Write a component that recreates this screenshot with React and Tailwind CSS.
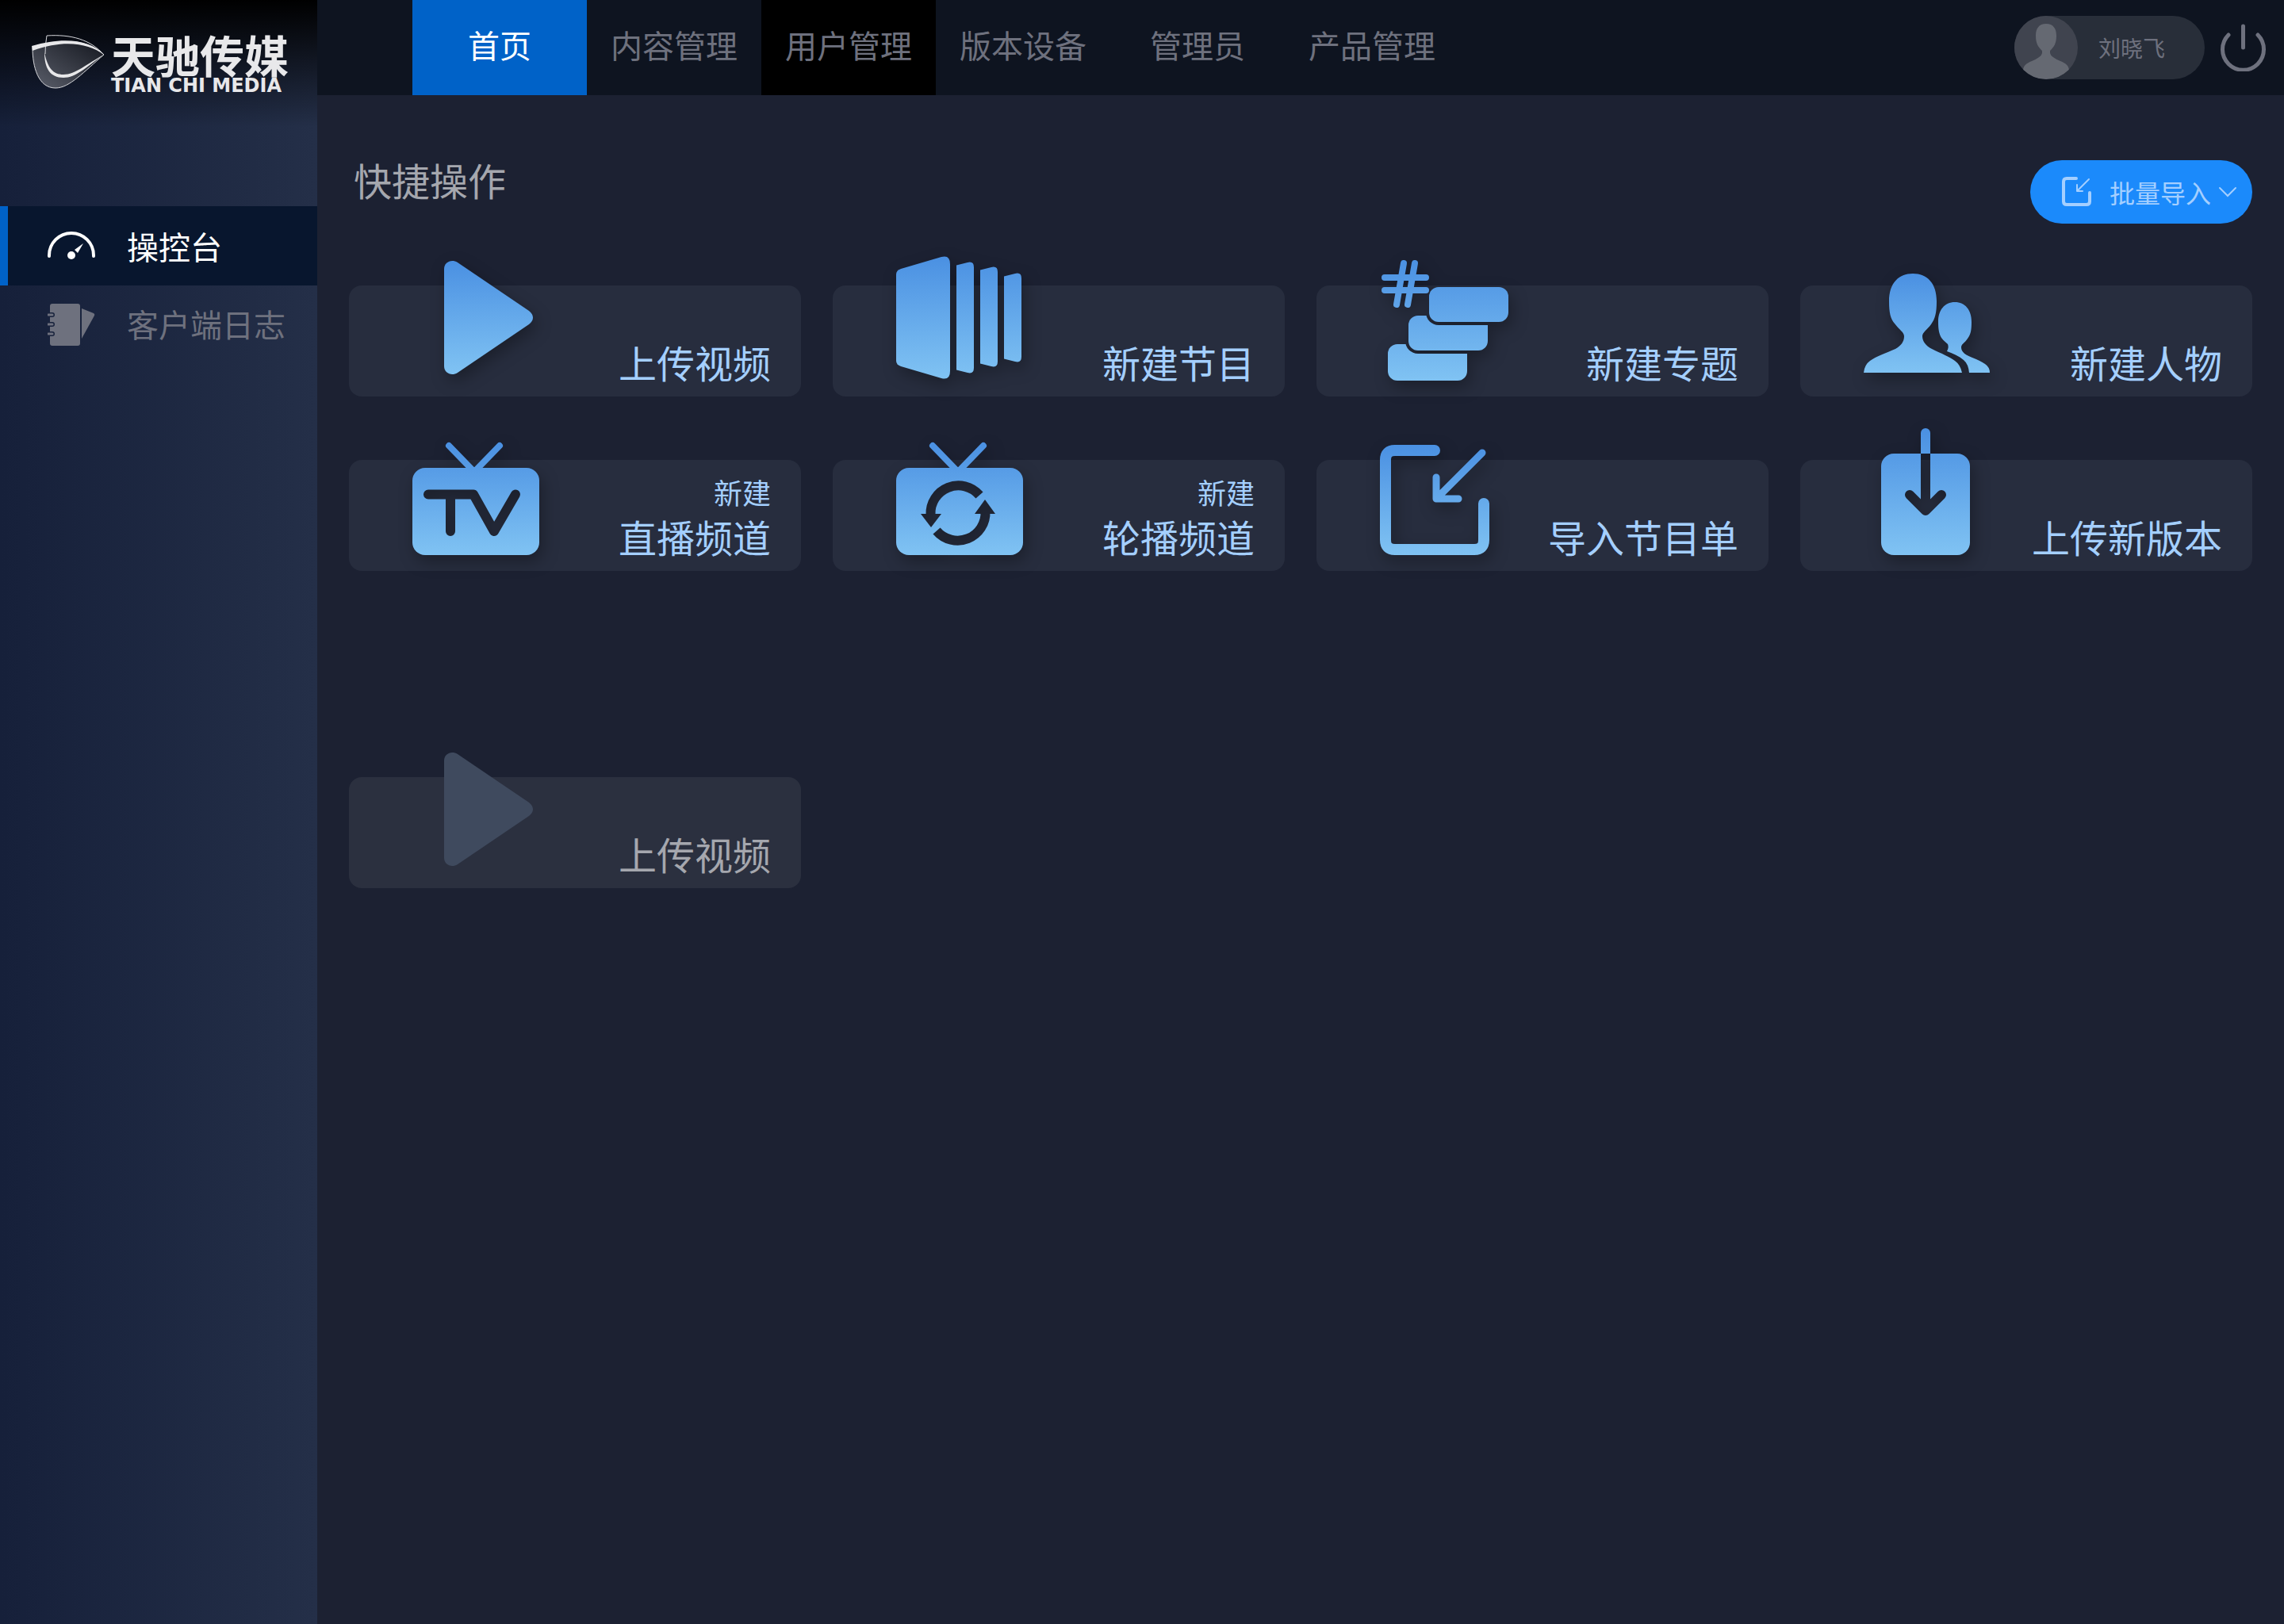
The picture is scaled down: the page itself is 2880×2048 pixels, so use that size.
import React, { useId } from 'react';

const FONT = "font-['Noto_Sans_CJK_SC',sans-serif]";

function Gradient({ id, h }) {
  return (
    <linearGradient id={id} gradientUnits="userSpaceOnUse" x1="0" y1="0" x2="0" y2={h}>
      <stop offset="0" stopColor="#4a90e2" />
      <stop offset="1" stopColor="#80c3f3" />
    </linearGradient>
  );
}

function Art({ w, h, muted, children }) {
  const id = useId();
  const paint = muted ? '#3f4a5e' : `url(#${id})`;
  return (
    <svg
      width={w}
      height={h}
      viewBox={`0 0 ${w} ${h}`}
      aria-hidden="true"
      className={muted ? 'overflow-visible' : 'overflow-visible drop-shadow-[4px_8px_10px_rgba(0,0,0,0.3)]'}
    >
      <defs>
        <Gradient id={id} h={h} />
      </defs>
      {children(paint, id)}
    </svg>
  );
}

const PlayArt = ({ muted }) => (
  <Art w={112} h={143} muted={muted}>
    {(p) => <path fill={p} d="M0 10C0 2 9-3 17 2L107 63Q112 67 112 71.500Q112 76 107 80L17 141C9 146 0 141 0 133Z" />}
  </Art>
);

const PanelsArt = () => (
  <Art w={158} h={155}>
    {(p) => (
      <g fill={p}>
        <path d="M0 23Q0 18 6 16L57 1Q68-2 68 10V145Q68 157 57 154L6 139Q0 137 0 132Z" />
        <path d="M76 11.500L90 8Q98 6 98 14V141Q98 149 90 147L76 143.500Z" />
        <path d="M106 17.500L120 14Q128 12 128 20V133Q128 141 120 139L106 135.500Z" />
        <path d="M136 25.500L150 22Q158 20 158 28V127Q158 135 150 133L136 129.500Z" />
      </g>
    )}
  </Art>
);

const TopicsArt = () => (
  <Art w={160} h={152}>
    {(p, id) => (
      <>
        <g stroke={p} strokeWidth="8" strokeLinecap="round" fill="none">
          <path d="M28 4L19 56M42 4L33 56" />
          <path d="M4 22L56 22.010M4 38L56 38.010" />
        </g>
        <mask id={`${id}a`}>
          <rect width="160" height="152" fill="#fff" />
          <rect x="56" y="30" width="108" height="52" rx="16" fill="#000" />
          <rect x="100" y="60" width="60" height="22" fill="#000" />
        </mask>
        <mask id={`${id}b`}>
          <rect width="160" height="152" fill="#fff" />
          <rect x="30" y="66" width="108" height="52" rx="16" fill="#000" />
          <rect x="80" y="96" width="60" height="22" fill="#000" />
        </mask>
        <g fill={p}>
          <rect x="60" y="34" width="100" height="44" rx="12" />
          <rect x="34" y="70" width="100" height="44" rx="12" mask={`url(#${id}a)`} />
          <rect x="8" y="106" width="100" height="46" rx="12" mask={`url(#${id}b)`} />
        </g>
      </>
    )}
  </Art>
);

const PeopleArt = () => (
  <Art w={160} h={125}>
    {(p) => (
      <g fill={p}>
        <path d="M62 0C80 0 92 12 92 35C92 50 90 57 85 64C80 71 74 74 74 79C74 85 78 91 86 95C98 101 109 105 115 110Q122 115 124 125H0Q1 115 8 110C16 104 27 101 40 95C47 91 51 86 51 79C51 74 45 71 39 63C34 57 32 50 32 35C32 12 44 0 62 0Z" />
        <path d="M115 36C128 36 136 46 136 61C136 71 135 77 131 82C127 88 123 89 123 93C123 99 129 103 137 106C144 109 149 111 153 114Q159 118 159 125H133Q132 114 126 109C120 104 113 101 105 98C107 94 107 92 106 89C104 87 101 85 98 81C95 76 94 70 94 61C94 46 102 36 115 36Z" />
      </g>
    )}
  </Art>
);

const TvArt = ({ children }) => (
  <Art w={160} h={142}>
    {(p, id) => (
      <>
        <mask id={`${id}m`}>
          <rect width="160" height="142" fill="#fff" />
          {children}
        </mask>
        <path d="M46 4L78 37L110 4" fill="none" stroke={p} strokeWidth="8" strokeLinecap="round" />
        <rect y="32" width="160" height="110" rx="16" fill={p} mask={`url(#${id}m)`} />
      </>
    )}
  </Art>
);

const LiveArt = () => (
  <TvArt>
    <path
      d="M20 65.500H77L103 112L130 65.500M48 65.500V112"
      fill="none"
      stroke="#000"
      strokeWidth="12"
      strokeLinecap="round"
      strokeLinejoin="round"
    />
  </TvArt>
);

const LoopArt = () => (
  <TvArt>
    <g fill="none" stroke="#000" strokeWidth="12">
      <path d="M105 66.500A35 35 0 0 0 43.500 91" />
      <path d="M51 111.500A35 35 0 0 0 112.500 87" />
    </g>
    <path d="M31 90H57L44 107ZM99 90H125L112 72Z" fill="#000" />
  </TvArt>
);

const ImportArt = () => (
  <Art w={138} h={139}>
    {(p) => (
      <g fill="none" stroke={p} strokeLinecap="round" strokeLinejoin="round">
        <path strokeWidth="14" d="M69 7H19Q7 7 7 19V120Q7 132 19 132H119Q131 132 131 120V74" />
        <path strokeWidth="9" d="M129 10L71 68M71 41V68H99" />
      </g>
    )}
  </Art>
);

const ReleaseArt = () => (
  <Art w={112} h={160}>
    {(p, id) => (
      <>
        <mask id={`${id}m`}>
          <rect width="112" height="160" fill="#fff" />
          <path d="M56 20V100" stroke="#000" strokeWidth="12" />
          <path d="M36 84L56 104L76 84" fill="none" stroke="#000" strokeWidth="12" strokeLinecap="round" strokeLinejoin="round" />
        </mask>
        <path d="M50 32V6A6 6 0 0 1 62 6V32Z" fill={p} />
        <rect y="32" width="112" height="128" rx="16" fill={p} mask={`url(#${id}m)`} />
      </>
    )}
  </Art>
);

function ImportGlyph() {
  return (
    <svg width="38" height="38" viewBox="0 0 38 38" fill="none" stroke="currentColor" strokeLinecap="round" strokeLinejoin="round" aria-hidden="true">
      <path strokeWidth="4" d="M18 2H6Q2 2 2 6V31Q2 35 6 35H31Q35 35 35 31V20" />
      <path strokeWidth="2" d="M34 3L19 18M19 10V18H26" />
    </svg>
  );
}

function Logo() {
  return (
    <svg width="92" height="70" viewBox="0 0 92 70" fill="none" className="mt-1" aria-hidden="true">
      <defs>
        <linearGradient id="logoFill" x1="0" y1="1" x2="1" y2="0">
          <stop offset="0" stopColor="#5b5f6b" />
          <stop offset="1" stopColor="#14171f" />
        </linearGradient>
      </defs>
      <path d="M1 16C1 40 8 67 30 67C48 67 66 46 91 25C72 6 40 4 1 16Z" fill="url(#logoFill)" stroke="#d5d6da" strokeWidth="1" />
      <path d="M17 24Q17 12 19 1C50-1 74 6 91 25" stroke="#d5d6da" strokeWidth="1" />
      <path d="M0 14C40 2 74 6 91 25C72 11 42 5 1 20Z" fill="#e8e8ea" />
      <path d="M16 22C20 42 27 50 40 50C55 50 70 36 91 25C68 41 56 54 40 54C23 54 16 42 16 22Z" fill="#e8e8ea" />
    </svg>
  );
}

function GaugeIcon() {
  return (
    <svg width="60" height="36" viewBox="0 0 60 36" fill="none" aria-hidden="true">
      <path d="M2 31V30A28 28 0 0 1 58 30V31" stroke="currentColor" strokeWidth="4" strokeLinecap="round" />
      <circle cx="30" cy="30" r="5" fill="currentColor" />
      <path d="M45 15L34 23L38 27Z" fill="currentColor" />
    </svg>
  );
}

function NotebookIcon() {
  return (
    <svg width="60" height="54" viewBox="0 0 60 54" aria-hidden="true">
      <mask id="rings">
        <rect width="60" height="54" fill="#fff" />
        <path d="M0 14H6M0 26H6M0 38H6" stroke="#000" strokeWidth="6" strokeLinecap="round" />
      </mask>
      <rect x="3" y="0" width="38" height="53" rx="3" fill="currentColor" mask="url(#rings)" />
      <path d="M1 14H6M1 26H6M1 38H6" stroke="currentColor" strokeWidth="3" strokeLinecap="round" />
      <path d="M43 6L58 12Q60 13 59 15L43 44Z" fill="currentColor" />
    </svg>
  );
}

function AvatarIcon() {
  return (
    <svg width="80" height="80" viewBox="0 0 80 80" className="rounded-full bg-[#40444f]" aria-hidden="true">
      <path
        fill="#656972"
        d="M40 10C49 10 53 16 53 25C53 35 50 39 45 44V47Q46 52 58 57C65 60 68 62 69 68Q58 80 40 80Q22 80 11 68C12 62 15 60 22 57Q34 52 35 47V44C30 39 27 35 27 25C27 16 31 10 40 10Z"
      />
    </svg>
  );
}

function PowerIcon() {
  return (
    <svg width="58" height="60" viewBox="0 0 58 60" fill="none" stroke="currentColor" strokeWidth="5" strokeLinecap="round" aria-hidden="true">
      <path d="M28.500 3V30M10 14A26 26 0 1 0 47 14" />
    </svg>
  );
}

const tabs = ['首页', '内容管理', '用户管理', '版本设备', '管理员', '产品管理'];

const tabTone = {
  首页: 'bg-[#0062c8] text-white',
  用户管理: 'bg-black text-[#6e717e]',
};

const actions = [
  { title: '上传视频', art: <PlayArt />, place: 'left-[120px] bottom-[28px]' },
  { title: '新建节目', art: <PanelsArt />, place: 'left-[80px] bottom-[22px]' },
  { title: '新建专题', art: <TopicsArt />, place: 'left-[82px] bottom-[20px]' },
  { title: '新建人物', art: <PeopleArt />, place: 'left-[80px] bottom-[30px]' },
  { title: '直播频道', sub: '新建', art: <LiveArt />, place: 'left-[80px] bottom-[20px]' },
  { title: '轮播频道', sub: '新建', art: <LoopArt />, place: 'left-[80px] bottom-[20px]' },
  { title: '导入节目单', art: <ImportArt />, place: 'left-[80px] bottom-[20px]' },
  { title: '上传新版本', art: <ReleaseArt />, place: 'left-[102px] bottom-[20px]' },
];

function ActionCard({ title, sub, art, place, muted }) {
  return (
    <button
      type="button"
      disabled={muted}
      className={`relative flex h-[140px] flex-col items-end justify-end rounded-2xl pr-[38px] pb-4 text-right ${
        muted ? 'bg-[#2b303f] text-[#a5a7ae]' : 'bg-[#272d3e] text-[#a4cfff]'
      }`}
    >
      <span className={`absolute ${place}`}>{art}</span>
      {sub && <span className="mb-1 text-4xl leading-[48px]">{sub}</span>}
      <span className="text-5xl leading-[56px]">{title}</span>
    </button>
  );
}

export default function App() {
  return (
    <div className={`flex min-h-screen bg-[#1c2132] font-normal ${FONT}`}>
      <aside className="w-[400px] shrink-0 bg-gradient-to-r from-[#16203a] to-[#242f48]">
        <div className="flex h-[160px] items-start bg-gradient-to-b from-black to-transparent pt-10 pl-10">
          <Logo />
          <div className="ml-2 flex flex-col text-[#e8e8ea]">
            <span className="text-[56px] leading-[56px] font-bold">天驰传媒</span>
            <span className="font-['DejaVu_Sans',sans-serif] text-2xl leading-6 font-bold">TIAN CHI MEDIA</span>
          </div>
        </div>
        <nav className="mt-[100px] flex flex-col text-[40px]">
          <a href="#console" className="flex h-[100px] items-center border-l-[10px] border-[#0062c8] bg-[#08162e] pl-[50px] text-white">
            <GaugeIcon />
            <span className="ml-10">操控台</span>
          </a>
          <a href="#logs" className="flex h-[100px] items-center pl-[60px] text-[#6e717e]">
            <NotebookIcon />
            <span className="ml-10 pb-1">客户端日志</span>
          </a>
        </nav>
      </aside>

      <div className="flex min-w-0 flex-1 flex-col">
        <header className="flex h-[120px] items-center bg-[#0e1420] pr-[22px] pl-[120px] text-[#6e717e]">
          <nav className="flex self-stretch text-[40px]">
            {tabs.map((t) => (
              <a key={t} href="#tab" className={`flex w-[220px] items-center justify-center pb-2 ${tabTone[t] || ''}`}>
                {t}
              </a>
            ))}
          </nav>
          <button type="button" className="ml-auto flex h-20 w-60 items-center rounded-full bg-[#282e39] text-[28px]">
            <AvatarIcon />
            <span className="ml-[26px]">刘晓飞</span>
          </button>
          <button type="button" aria-label="退出" className="ml-5">
            <PowerIcon />
          </button>
        </header>

        <main className="px-10 pt-[82px]">
          <div className="flex h-20 items-start justify-between">
            <h1 className="pl-[6px] text-5xl leading-[48px] text-[#a5a7ae]">快捷操作</h1>
            <button type="button" className="flex h-20 w-[280px] items-center rounded-full bg-[#1b8afb] pl-10 text-[32px] text-[#a4cfff]">
              <ImportGlyph />
              <span className="ml-[22px]">批量导入</span>
              <svg width="24" height="14" viewBox="0 0 24 14" fill="none" stroke="currentColor" strokeWidth="2" strokeLinecap="round" className="ml-[9px]" aria-hidden="true">
                <path d="M2 2L12 12L22 2" />
              </svg>
            </button>
          </div>

          <div className="mt-[78px] grid grid-cols-4 gap-x-10 gap-y-20">
            {actions.map((a) => (
              <ActionCard key={a.title} {...a} />
            ))}
          </div>
          <div className="mt-[260px] grid grid-cols-4 gap-x-10">
            <ActionCard title="上传视频" art={<PlayArt muted />} place="left-[120px] bottom-[28px]" muted />
          </div>
        </main>
      </div>
    </div>
  );
}
